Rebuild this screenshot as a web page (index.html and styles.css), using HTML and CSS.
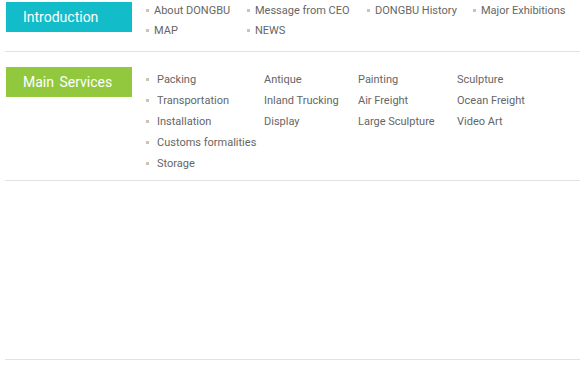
FILE: index.html
```html
<!DOCTYPE html>
<html lang="en">
<head>
    <meta charset="UTF-8">
    <meta name="viewport" content="width=device-width, initial-scale=1.0">
    <title>Sitemap</title>
    <link rel="stylesheet" href="styles.css">
</head>
<body>
    <div class="sitemap">
        <div class="section section-intro">
            <h2 class="section-title title-intro">Introduction</h2>
            <ul class="menu menu-intro">
                <li><span class="dot"></span>About DONGBU</li>
                <li><span class="dot"></span>Message from CEO</li>
                <li><span class="dot"></span>DONGBU History</li>
                <li><span class="dot"></span>Major Exhibitions</li>
                <li><span class="dot"></span>MAP</li>
                <li><span class="dot"></span>NEWS</li>
            </ul>
        </div>
        <div class="section section-services">
            <h2 class="section-title title-services">Main Services</h2>
            <div class="menu-services">
                <ul class="menu col-main">
                    <li><span class="dot"></span>Packing</li>
                    <li><span class="dot"></span>Transportation</li>
                    <li><span class="dot"></span>Installation</li>
                    <li><span class="dot"></span>Customs formalities</li>
                    <li><span class="dot"></span>Storage</li>
                </ul>
                <ul class="menu col-sub col-2">
                    <li>Antique</li>
                    <li>Inland Trucking</li>
                    <li>Display</li>
                </ul>
                <ul class="menu col-sub col-3">
                    <li>Painting</li>
                    <li>Air Freight</li>
                    <li>Large Sculpture</li>
                </ul>
                <ul class="menu col-sub col-4">
                    <li>Sculpture</li>
                    <li>Ocean Freight</li>
                    <li>Video Art</li>
                </ul>
            </div>
        </div>
        <div class="section section-empty"></div>
    </div>
</body>
</html>
```

FILE: styles.css
```css
body { margin: 0; background: #fff; font-family: Roboto, "Liberation Sans", sans-serif; }
.sitemap { margin-left: 5px; width: 575px; }
.section { display: flex; align-items: flex-start; border-bottom: 1px solid #e2e2e2; }
.section-intro { height: 51px; }
.section-services { height: 128px; }
.section-empty { height: 178px; }
.section-title { margin: 0 0 0 1px; width: 126px; height: 30px; line-height: 30px; padding-left: 17px; box-sizing: border-box; color: #fff; font-size: 14px; font-weight: normal; }
.title-intro { background: #13bcc9; margin-top: 2px; }
.title-services { background: #92c83e; margin-top: 15px; word-spacing: 2px; }
ul { list-style: none; margin: 0; padding: 0; }
.menu li { font-size: 11px; color: #666; white-space: nowrap; display: flex; align-items: center; }
.dot { width: 3px; height: 3px; background: #cbc4b4; margin-right: 5px; flex-shrink: 0; }
.menu-intro { display: grid; grid-template-columns: 101px 120px 106px auto; margin-left: 14px; }
.menu-intro li { height: 20px; }
.menu-services { display: flex; margin-top: 17px; margin-left: 14px; }
.menu-services li { height: 21px; }
.col-main .dot { margin-right: 8px; }
.col-main { width: 118px; }
.col-2 { width: 94px; }
.col-3 { width: 99px; }
```
